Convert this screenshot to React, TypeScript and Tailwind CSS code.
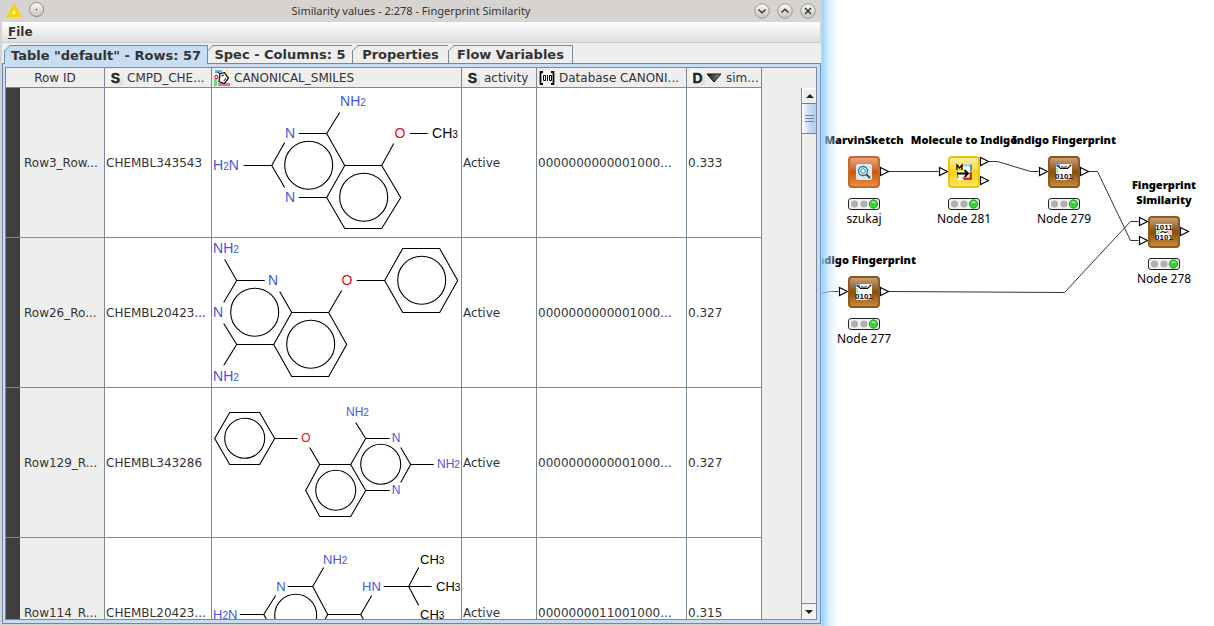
import type { ReactNode } from "react";

const BLUE = "#3f58dc";
const RED = "#e01020";
const BLACK = "#000000";

type Label = { x: number; y: number; text: string; color: string; center?: boolean };
type MoleculeData = {
  name: string;
  size: number;
  bonds: string;
  rings: [number, number, number][];
  labels: Label[];
};

const molecules: MoleculeData[] = [
  {
    name: "5-methoxyquinazoline-2,4-diamine",
    size: 14,
    bonds:
      "M32 77H60L73 54M60 77L73 99M87 45H115L128 24M115 45L133 77H170L189 109L170 140H133L115 109H87M133 77L115 109M170 77L182 55M198 45H216",
    rings: [[97, 77, 24], [152, 109, 24]],
    labels: [
      { x: 78, y: 45, text: "N", color: BLUE, center: true },
      { x: 78, y: 109, text: "N", color: BLUE, center: true },
      { x: 128, y: 13, text: "NH2", color: BLUE },
      { x: 1, y: 77, text: "H2N", color: BLUE },
      { x: 188, y: 45, text: "O", color: RED, center: true },
      { x: 220, y: 45, text: "CH3", color: BLACK },
    ],
  },
  {
    name: "8-phenoxyquinazoline-2,4-diamine",
    size: 14,
    bonds:
      "M13 21L25 42H53M25 42L12 64M12 85L25 106L12 127M25 106H62L80 74L68 53M80 74H117L135 106L117 138H80L62 106M117 74L130 52M145 42H173L191 10H228L246 42L228 74H191L173 42",
    rings: [[43, 74, 24], [99, 106, 24], [210, 42, 24]],
    labels: [
      { x: 61, y: 42, text: "N", color: BLUE, center: true },
      { x: 6, y: 74, text: "N", color: BLUE, center: true },
      { x: 1, y: 10, text: "NH2", color: BLUE },
      { x: 1, y: 138, text: "NH2", color: BLUE },
      { x: 135, y: 42, text: "O", color: RED, center: true },
    ],
  },
  {
    name: "5-phenoxyquinazoline-2,4-diamine",
    size: 12,
    bonds:
      "M86 50H63L48 24H18L3 50L18 76H48L63 50M98 59L108 76H139L154 50L144 34M154 50H178M189 59L199 76H222M199 76L189 94M178 102H154L139 76M154 102L139 128H108L94 102L108 76",
    rings: [[33, 50, 20], [124, 102, 20], [169, 76, 20]],
    labels: [
      { x: 94, y: 50, text: "O", color: RED, center: true },
      { x: 134, y: 24, text: "NH2", color: BLUE },
      { x: 184, y: 50, text: "N", color: BLUE, center: true },
      { x: 184, y: 102, text: "N", color: BLUE, center: true },
      { x: 225, y: 76, text: "NH2", color: BLUE },
    ],
  },
  {
    name: "5-(tert-butylaminomethyl)quinazoline-2,4-diamine",
    size: 13,
    bonds:
      "M28 76H52L64 57M52 76L68 104M76 48H101L112 29M101 48L116 76H149L160 57M116 76L101 104M149 76L165 104M172 48H197L207 29M197 48H220M197 48L207 67",
    rings: [[84, 77, 21]],
    labels: [
      { x: 69, y: 49, text: "N", color: BLUE, center: true },
      { x: 111, y: 22, text: "NH2", color: BLUE },
      { x: 1, y: 77, text: "H2N", color: BLUE },
      { x: 150, y: 49, text: "HN", color: BLUE },
      { x: 208, y: 22, text: "CH3", color: BLACK },
      { x: 224, y: 49, text: "CH3", color: BLACK },
      { x: 208, y: 77, text: "CH3", color: BLACK },
    ],
  },
];

const rows = [
  { id: "Row3_Row...", chembl: "CHEMBL343543", similarity: "0.333", bits: "0000000000001000..." },
  { id: "Row26_Ro...", chembl: "CHEMBL20423...", similarity: "0.327", bits: "0000000000001000..." },
  { id: "Row129_R...", chembl: "CHEMBL343286", similarity: "0.327", bits: "0000000000001000..." },
  { id: "Row114_R...", chembl: "CHEMBL20423...", similarity: "0.315", bits: "0000000011001000..." },
];

function Molecule({ data }: { data: MoleculeData }) {
  return (
    <svg className="block" width="249" height="149" viewBox="0 0 249 149" role="img" aria-label={data.name}>
      <g transform="translate(-0.3 0.5)" fill="none" stroke="#000" strokeWidth="1.1">
        <path d={data.bonds} />
        {data.rings.map(([x, y, r]) => (
          <circle key={`${x}-${y}`} cx={x} cy={y - 0.3} r={r} />
        ))}
      </g>
      {data.labels.map((l) => (
        <text
          key={`${l.x}-${l.y}`}
          x={l.x}
          y={l.y + (data.size > 13 ? 5 : 4)}
          fill={l.color}
          fontSize={data.size}
          fontFamily="'Liberation Sans', Arial, sans-serif"
          textAnchor={l.center ? "middle" : "start"}
        >
          {l.text.split("").map((c, i) => (
            <tspan key={i} fontSize={/\d/.test(c) ? 10 : data.size}>
              {c}
            </tspan>
          ))}
        </text>
      ))}
    </svg>
  );
}

function TypeIcon({ letter }: { letter: string }) {
  return (
    <svg width="15" height="15" viewBox="0 0 15 15" className="shrink-0">
      <defs>
        <linearGradient id={`type-${letter}`} x1="0" y1="0" x2="1" y2="1">
          <stop offset="0" stopColor="#fff" />
          <stop offset="0.6" stopColor="#eee" />
          <stop offset="1" stopColor="#d8d8d8" />
        </linearGradient>
      </defs>
      <rect width="15" height="15" fill={`url(#type-${letter})`} />
      <text x="7.5" y="13" textAnchor="middle" fontSize="14" fontWeight="700" fontFamily="'Liberation Sans', sans-serif" fill="#222" stroke="#222" strokeWidth="0.4">
        {letter}
      </text>
    </svg>
  );
}

function SmilesIcon() {
  return (
    <svg width="16" height="16" viewBox="0 0 16 16" className="shrink-0">
      <rect width="16" height="16" fill="#fff" />
      <path d="M1 0H8V3H1Z" fill="#62b8f0" />
      <path d="M11 0h4v6z" fill="#fbe3b0" />
      <path d="M0 9h3v7H0z" fill="#62dc80" />
      <path d="M4 13h12v3H4z" fill="#f07080" />
      <path d="M6 4L10.500 2.500L14.500 8L10.500 13.500L5 11.500Z" fill="#fff" stroke="#111" strokeWidth="1.3" />
      <path d="M3.500 2L6 4M7.500 6L10 5M12 8L9.800 11" stroke="#111" />
      <circle cx="2.3" cy="7" r="1.6" fill="none" stroke="#e02030" strokeWidth="1.100" />
    </svg>
  );
}

function BitVectorIcon() {
  return (
    <svg width="16" height="16" viewBox="0 0 16 16" className="shrink-0" fill="none" stroke="#000">
      <rect width="16" height="16" fill="#fff" stroke="none" />
      <path d="M4 2H1.500V14H4M12 2H14.500V14H12" strokeWidth="1.800" />
      <path d="M4.500 5.500h2v5h-2zM8.500 5v6M10.500 5.500h2v5h-2z" />
    </svg>
  );
}

function SortIcon() {
  return (
    <svg width="16" height="10" viewBox="0 0 16 10" className="shrink-0">
      <defs>
        <linearGradient id="sort">
          <stop offset="0" stopColor="#111" />
          <stop offset="1" stopColor="#999" />
        </linearGradient>
      </defs>
      <path d="M1 1H15L8 9Z" fill="url(#sort)" stroke="#111" />
    </svg>
  );
}

function Tab({ children, selected, width }: { children: ReactNode; selected?: boolean; width: string }) {
  const base = "relative shrink-0 border-t border-r text-center text-[13px] leading-[17px] font-bold whitespace-nowrap";
  const look = selected
    ? "z-10 ml-[2px] -mb-px h-[19px] border-l border-[#7089b5] bg-[#c8ddf2]"
    : "h-[18px] border-[#7a8a99] bg-[#eee]";
  return (
    <button type="button" role="tab" aria-selected={!!selected} className={`${base} ${look} ${width}`}>
      <svg width="7" height="7" viewBox="0 0 7 7" className="absolute -top-px -left-px">
        <path d="M0 0H6L0 6Z" fill="#eee" />
        <path d="M0 6.500L6.500 0" stroke={selected ? "#7089b5" : "#7a8a99"} />
      </svg>
      {children}
    </button>
  );
}

function TitleButton({ label, d }: { label: string; d: string }) {
  return (
    <button type="button" aria-label={label} className="size-4">
      <svg width="16" height="16" viewBox="0 0 16 16">
        <circle cx="8" cy="8" r="7.200" fill="url(#knob)" stroke="#9a9896" />
        <path d={d} fill="none" stroke="#333" strokeWidth="1.500" />
      </svg>
    </button>
  );
}

const headCell = "border-r border-b border-[#7a8a99] bg-[#eee] p-0 font-normal";
const bodyCell = "border-r border-b border-[#7a8a99] bg-white p-0 pl-px";

function ResultTable() {
  return (
    <table className="w-[756px] shrink-0 table-fixed border-separate border-spacing-0 self-start text-left text-[12px] leading-4 whitespace-nowrap text-[#333]">
      <colgroup>
        <col className="w-[99px]" />
        <col className="w-[107px]" />
        <col className="w-[250px]" />
        <col className="w-[75px]" />
        <col className="w-[150px]" />
        <col className="w-[75px]" />
      </colgroup>
      <thead>
        <tr className="h-5">
          <th className={`${headCell} text-center`}>Row ID</th>
          <th className={headCell}>
            <span className="flex items-center gap-1 pl-[3px]"><TypeIcon letter="S" />CMPD_CHE...</span>
          </th>
          <th className={headCell}>
            <span className="flex items-center gap-1 pl-[2px]"><SmilesIcon />CANONICAL_SMILES</span>
          </th>
          <th className={headCell}>
            <span className="flex items-center gap-1 pl-[3px]"><TypeIcon letter="S" />activity</span>
          </th>
          <th className={headCell}>
            <span className="flex items-center gap-1 pl-[2px]"><BitVectorIcon />Database CANONI...</span>
          </th>
          <th className={headCell}>
            <span className="flex items-center gap-1 pl-[3px]">
              <span className="flex items-center gap-px"><TypeIcon letter="D" /><SortIcon /></span>sim...
            </span>
          </th>
        </tr>
      </thead>
      <tbody>
        {rows.map((r, i) => (
          <tr key={r.id} className="h-[150px]">
            <th scope="row" className="border-r border-b border-[#7a8a99] bg-[#eee] p-0 font-normal">
              <span className="flex h-[149px] items-center border-l-[14px] border-[#3f3f3f] pl-1">{r.id}</span>
            </th>
            <td className={bodyCell}>{r.chembl}</td>
            <td className="overflow-hidden border-r border-b border-[#7a8a99] bg-white p-0"><Molecule data={molecules[i]} /></td>
            <td className={bodyCell}>Active</td>
            <td className={bodyCell}>{r.bits}</td>
            <td className={bodyCell}>{r.similarity}</td>
          </tr>
        ))}
      </tbody>
    </table>
  );
}

function ScrollBar() {
  return (
    <div className="mt-5 flex w-[15px] shrink-0 flex-col border-l border-[#7a8a99] bg-[#eee]">
      <button type="button" aria-label="Scroll up" className="flex h-[15px] items-center justify-center border-t border-l border-white bg-[#eee]">
        <svg width="8" height="4" viewBox="0 0 8 4"><path d="M0 4L4 0L8 4Z" fill="#222" /></svg>
      </button>
      <div className="flex h-[31px] flex-col items-center justify-center gap-[2px] border-y border-[#6382bf] bg-linear-to-r from-white via-[#c8dcf2] to-[#b4cdea]">
        <span className="h-px w-[9px] bg-[#6382bf]" />
        <span className="h-px w-[9px] bg-[#6382bf]" />
        <span className="h-px w-[9px] bg-[#6382bf]" />
      </div>
      <div className="flex-1" />
      <button type="button" aria-label="Scroll down" className="flex h-4 items-center justify-center border-t border-[#7a8a99] bg-[#f4f4f4]">
        <svg width="8" height="4" viewBox="0 0 8 4"><path d="M0 0L4 4L8 0Z" fill="#222" /></svg>
      </button>
    </div>
  );
}

function TableWindow() {
  return (
    <section className="flex min-w-0 flex-1 flex-col bg-[#d6d3d0] font-['DejaVu_Sans',sans-serif] text-[#333]">
      <header className="flex h-[22px] shrink-0 items-center px-[6px]">
        <div className="w-[62px] shrink-0">
          <svg width="40" height="18" viewBox="0 0 40 18" className="block">
            <defs>
              <linearGradient id="knob" x1="0" y1="0" x2="0" y2="1">
                <stop offset="0" stopColor="#fafafa" />
                <stop offset="1" stopColor="#c8c5c2" />
              </linearGradient>
            </defs>
            <path d="M8 1L16 15H0Z" fill="#f8d210" />
            <path d="M8 7.500L10.500 12H5.500Z" fill="#fff3a8" />
            <circle cx="30.500" cy="7.500" r="7" fill="url(#knob)" stroke="#8a8886" />
            <circle cx="30.500" cy="7.500" r="0.800" fill="#333" />
          </svg>
        </div>
        <h1 className="flex-1 text-center font-['Noto_Sans',sans-serif] text-[11px] leading-4 whitespace-nowrap">
          Similarity values - 2:278 - Fingerprint Similarity
        </h1>
        <div className="flex shrink-0 gap-[7px]">
          <TitleButton label="Minimize" d="M4.500 6.500L8 9.800L11.500 6.500" />
          <TitleButton label="Maximize" d="M4.500 9.500L8 6.200L11.500 9.500" />
          <TitleButton label="Close" d="M5 5L11 11M11 5L5 11" />
        </div>
      </header>
      <nav className="mx-[2px] flex h-[21px] shrink-0 items-center border-b border-[#ccc] bg-linear-to-b from-white to-[#dedede] px-[6px]">
        <button type="button" className="text-[12px] leading-4 font-bold"><span className="underline underline-offset-2">F</span>ile</button>
      </nav>
      <div className="mr-px ml-[2px] flex min-h-0 flex-1 flex-col bg-[#eee] pt-[2px]">
        <div role="tablist" className="flex shrink-0">
          <Tab selected width="w-[204px]">Table "default" - Rows: 57</Tab>
          <Tab width="w-[145px]">Spec - Columns: 5</Tab>
          <Tab width="w-[96px]">Properties</Tab>
          <Tab width="w-[124px]">Flow Variables</Tab>
        </div>
        <div className="flex min-h-0 flex-1 flex-col border border-[#6b87b5] bg-[#c8ddf2] pt-[3px] pr-[3px] pb-[3px] pl-[2px]">
          <div className="flex min-h-0 flex-1 overflow-hidden border border-[#7a8a99] bg-[#eee]">
            <ResultTable />
            <div className="flex-1" />
            <ScrollBar />
          </div>
        </div>
      </div>
      <div className="h-[2px] shrink-0" />
    </section>
  );
}

type Tone = "orange" | "yellow" | "brown";
const tones: Record<Tone, string> = {
  orange: "border-[#c06a30] from-[#e8a878] via-[#c8560e] to-[#ee8c3c]",
  yellow: "border-[#ecc400] from-[#fff0a0] via-[#f6d000] to-[#ffe860]",
  brown: "border-[#8a5a20] from-[#c8a070] via-[#855008] to-[#c88838]",
};

type Art = "search" | "convert" | "fingerprint" | "similarity";
const bitText = {
  fontSize: 8,
  fontWeight: 700,
  fontFamily: "'Liberation Sans', sans-serif",
  textAnchor: "middle" as const,
  fill: "#000",
};

function NodeArt({ art }: { art: Art }) {
  return (
    <svg width="18" height="18" viewBox="0 0 18 18" className="overflow-visible">
      {art === "search" && (
        <>
          <rect x="1" y="1" width="16" height="16" rx="2" fill="#d5ebf5" />
          <circle cx="8" cy="8" r="4.500" fill="#eef8fc" stroke="#3a6a98" strokeWidth="1.300" />
          <path d="M8 5.500l2.200 1.200v2.600L8 10.500L5.800 9.300V6.700Z" fill="none" stroke="#4a8aa8" />
          <path d="M11.500 11.500L15 15" stroke="#204878" strokeWidth="1.800" />
        </>
      )}
      {art === "convert" && (
        <>
          <path d="M8 2h9v15H3V8h5z" fill="#fff" />
          <path d="M8 1.500h7v2H8z" fill="#8cd4f4" />
          <path d="M15 1.500h2v7h-2z" fill="#28a0d8" />
          <path d="M2 9h1.500v6H2z" fill="#40c050" />
          <path d="M7 14.500h10v2.500H9zM14.500 9h2.500v7h-2.500z" fill="#d83020" />
          <path d="M2 7V2L4.500 5L7 2V7" fill="none" stroke="#000" strokeWidth="1.300" />
          <path d="M2 10.500H13M9.500 7L13 10.500L9.500 14" fill="none" stroke="#000" strokeWidth="1.800" />
        </>
      )}
      {art === "fingerprint" && (
        <>
          <rect x="1" y="1" width="16" height="16" fill="#fff" />
          <path d="M1 1h4v3H1z" fill="#80c8f0" />
          <path d="M13 1h4v3z" fill="#f8d080" />
          <path d="M1 5h2v5H1z" fill="#a8e8b0" />
          <path d="M12 15h5v2h-5z" fill="#f08080" />
          <path d="M2 2L5.500 5.500H12.500L16 2M6 4H12" fill="none" stroke="#111" strokeWidth="1.200" />
          <text x="9" y="16" {...bitText}>0101</text>
        </>
      )}
      {art === "similarity" && (
        <>
          <rect x="1" y="1" width="16" height="16" fill="#fff" />
          <path d="M1 7h4v4H1z" fill="#a8e8b0" />
          <path d="M13 7h4v4h-4z" fill="#f8c0c0" />
          <text x="9" y="7" {...bitText}>1011</text>
          <path d="M5.500 9.800Q7 7.800 9 9T12.500 8.300" fill="none" stroke="#111" strokeWidth="1.200" />
          <text x="9" y="17" {...bitText}>0101</text>
        </>
      )}
    </svg>
  );
}

function WorkflowNode({ title, name, tone, art, place }: { title: ReactNode; name: string; tone: Tone; art: Art; place: string }) {
  return (
    <div className={`absolute flex w-40 -translate-x-1/2 flex-col items-center text-black ${place}`}>
      <div className="text-center text-[11px] leading-[15px] font-black whitespace-nowrap">{title}</div>
      <div className={`mt-[9px] flex size-8 items-center justify-center rounded-[4px] border-2 bg-linear-to-b ${tones[tone]}`}>
        <NodeArt art={art} />
      </div>
      <svg width="32" height="12" viewBox="0 0 32 12" className="mt-[10px]">
        <rect x="0.500" y="0.500" width="31" height="11" rx="2.500" fill="#f2f2f2" stroke="#222" />
        <circle cx="6.500" cy="6" r="3.600" fill="#b0b0b0" />
        <circle cx="16" cy="6" r="3.600" fill="#b0b0b0" />
        <circle cx="25.500" cy="6" r="4.200" fill="#35d435" stroke="#189018" strokeWidth="0.800" />
        <path d="M23 4.800Q25.500 2 28 4.800Z" fill="#d0ffd0" />
      </svg>
      <div className="mt-px text-[12px] leading-4">{name}</div>
    </div>
  );
}

const ports: [number, number][] = [
  [58, 171], [117, 171], [158, 161], [158, 180], [217, 171], [258, 171],
  [317, 221], [317, 240], [358, 231], [17, 291], [58, 291],
];

function WorkflowCanvas() {
  return (
    <main className="relative w-[392px] shrink-0 overflow-hidden bg-white font-['Noto_Sans',sans-serif]">
      <svg width="392" height="626" viewBox="0 0 392 626" className="absolute top-0 left-0">
        <g transform="translate(-0.5 0.5)" fill="none" stroke="#333">
          <path d="M67 171H117M167 161H176L209 171H217M267 171H276L309 240H317M67 291L243 292L309 221H317M0 293L8 291H17" />
        </g>
        <g transform="translate(-0.5 0.5)" fill="#fff" stroke="#000" strokeWidth="1.200">
          {ports.map(([x, y]) => (
            <path key={`${x}-${y}`} d={`M${x + 1} ${y - 4}L${x + 9} ${y}L${x + 1} ${y + 4}Z`} />
          ))}
        </g>
      </svg>
      <WorkflowNode place="top-[132px] left-[42px]" title="MarvinSketch" name="szukaj" tone="orange" art="search" />
      <WorkflowNode place="top-[132px] left-[142px]" title="Molecule to Indigo" name="Node 281" tone="yellow" art="convert" />
      <WorkflowNode place="top-[132px] left-[242px]" title="Indigo Fingerprint" name="Node 279" tone="brown" art="fingerprint" />
      <WorkflowNode place="top-[177px] left-[342px]" title={<>Fingerprint<br />Similarity</>} name="Node 278" tone="brown" art="similarity" />
      <WorkflowNode place="top-[252px] left-[42px]" title="Indigo Fingerprint" name="Node 277" tone="brown" art="fingerprint" />
      <div className="pointer-events-none absolute inset-y-0 left-0 w-4 bg-linear-to-r from-[#7cc8f8]/80 via-[#c4e2fb]/50 to-transparent" />
    </main>
  );
}

export default function App() {
  return (
    <div className="flex h-screen overflow-hidden bg-white">
      <TableWindow />
      <WorkflowCanvas />
    </div>
  );
}
